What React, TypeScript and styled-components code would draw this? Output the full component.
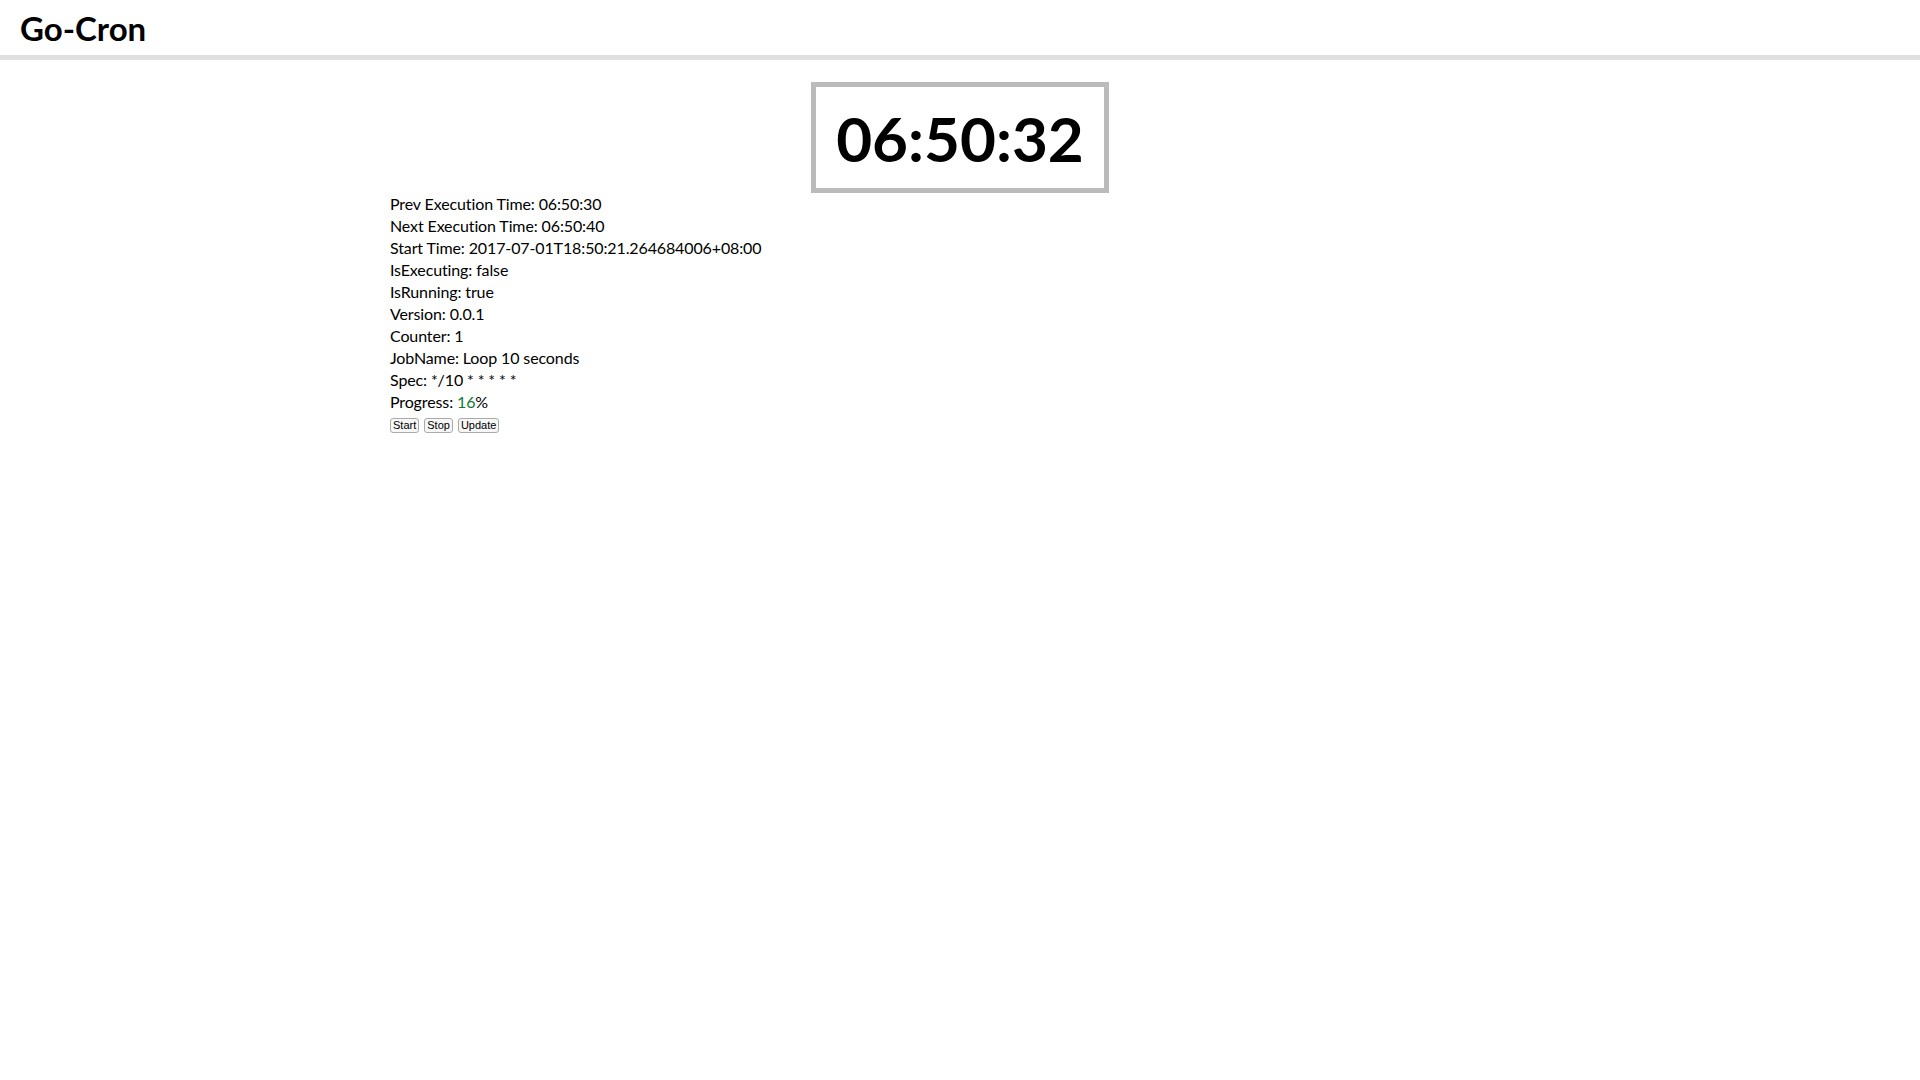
import styled, { createGlobalStyle } from 'styled-components';

const GlobalStyle = createGlobalStyle`
  html, body {
    margin: 0;
    padding: 0;
    background: #fff;
    color: #000;
    font-family: Lato, "Noto Sans", sans-serif;
  }
`;

const Header = styled.header`
  height: 55px;
  border-bottom: 5px solid #e0e0e0;
  padding: 0 20px;
  display: flex;
  align-items: center;
`;

const Brand = styled.h1`
  margin: 0;
  font-size: 33px;
  font-weight: 700;
`;

const Main = styled.main`
  width: 1140px;
  margin: 0 auto;
  padding-top: 22px;
`;

const Clock = styled.div`
  width: 288px;
  height: 101px;
  margin: 0 auto;
  border: 5px solid #bbb;
  display: flex;
  align-items: center;
  justify-content: center;
  font-size: 62px;
  font-weight: 700;
`;

const InfoList = styled.div`
  font-size: 16px;
  line-height: 22px;
  letter-spacing: -0.12px;
`;

const Line = styled.div``;

const Green = styled.span`
  color: #0b7a35;
`;

const Actions = styled.div`
  display: flex;
  gap: 5px;
  margin-top: 5px;
`;

const Button = styled.button`
  font-family: "Liberation Sans", Arial, sans-serif;
  font-size: 11px;
  height: 15px;
  padding: 0 2px;
  line-height: 13px;
  border: 1px solid #aaa;
  border-radius: 3px;
  background: #f6f6f6;
  color: #000;
`;

const rows = [
  'Prev Execution Time: 06:50:30',
  'Next Execution Time: 06:50:40',
  'Start Time: 2017-07-01T18:50:21.264684006+08:00',
  'IsExecuting: false',
  'IsRunning: true',
  'Version: 0.0.1',
  'Counter: 1',
  'JobName: Loop 10 seconds',
  'Spec: */10 * * * * *',
];

export default function App() {
  return (
    <>
      <GlobalStyle />
      <Header>
        <Brand>Go-Cron</Brand>
      </Header>
      <Main>
        <Clock>06:50:32</Clock>
        <InfoList>
          {rows.map((r) => (
            <Line key={r}>{r}</Line>
          ))}
          <Line>
            Progress: <Green>16</Green>%
          </Line>
        </InfoList>
        <Actions>
          <Button>Start</Button>
          <Button>Stop</Button>
          <Button>Update</Button>
        </Actions>
      </Main>
    </>
  );
}
